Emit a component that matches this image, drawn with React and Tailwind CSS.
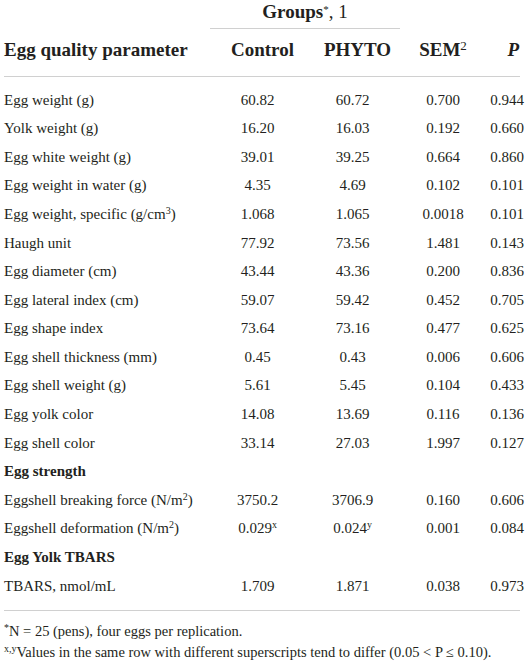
const rows = [
    { label: 'Egg weight (g)', c: '60.82', p: '60.72', sem: '0.700', pv: '0.944' },
    { label: 'Yolk weight (g)', c: '16.20', p: '16.03', sem: '0.192', pv: '0.660' },
    { label: 'Egg white weight (g)', c: '39.01', p: '39.25', sem: '0.664', pv: '0.860' },
    { label: 'Egg weight in water (g)', c: '4.35', p: '4.69', sem: '0.102', pv: '0.101' },
    {
        label: (
            <>
                Egg weight, specific (g/cm<sup className="text-[10px]">3</sup>)
            </>
        ),
        c: '1.068',
        p: '1.065',
        sem: '0.0018',
        pv: '0.101',
    },
    { label: 'Haugh unit', c: '77.92', p: '73.56', sem: '1.481', pv: '0.143' },
    { label: 'Egg diameter (cm)', c: '43.44', p: '43.36', sem: '0.200', pv: '0.836' },
    { label: 'Egg lateral index (cm)', c: '59.07', p: '59.42', sem: '0.452', pv: '0.705' },
    { label: 'Egg shape index', c: '73.64', p: '73.16', sem: '0.477', pv: '0.625' },
    { label: 'Egg shell thickness (mm)', c: '0.45', p: '0.43', sem: '0.006', pv: '0.606' },
    { label: 'Egg shell weight (g)', c: '5.61', p: '5.45', sem: '0.104', pv: '0.433' },
    { label: 'Egg yolk color', c: '14.08', p: '13.69', sem: '0.116', pv: '0.136' },
    { label: 'Egg shell color', c: '33.14', p: '27.03', sem: '1.997', pv: '0.127' },
    { section: 'Egg strength' },
    {
        label: (
            <>
                Eggshell breaking force (N/m<sup className="text-[10px]">2</sup>)
            </>
        ),
        c: '3750.2',
        p: '3706.9',
        sem: '0.160',
        pv: '0.606',
    },
    {
        label: (
            <>
                Eggshell deformation (N/m<sup className="text-[10px]">2</sup>)
            </>
        ),
        c: (
            <>
                0.029<sup className="text-[10px]">x</sup>
            </>
        ),
        p: (
            <>
                0.024<sup className="text-[10px]">y</sup>
            </>
        ),
        sem: '0.001',
        pv: '0.084',
    },
    { section: 'Egg Yolk TBARS' },
    { label: 'TBARS, nmol/mL', c: '1.709', p: '1.871', sem: '0.038', pv: '0.973' },
];

const cols = 'grid grid-cols-[206px_95px_95px_86px_38px]';

export default function App() {
    return (
        <div
            className="w-[531px] h-[665px] overflow-hidden bg-white text-[#231f20] pl-[4px] pr-[11px]"
            style={{ fontFamily: '"Liberation Serif", "Times New Roman", serif' }}
        >
            {/* header */}
            <div className={cols}>
                <div />
                <div className="col-span-2 h-[29px] flex items-center justify-center border-b border-[#d0d0d0] text-[19px] pb-[3px]">
                    <span className="font-bold">
                        Groups<sup className="text-[11px] font-normal">*</sup>
                    </span>
                    <span>, 1</span>
                </div>
            </div>
            <div className={`${cols} h-[48px] items-center border-b border-[#d0d0d0] text-[19px] font-bold pb-[4px]`}>
                <div>Egg quality parameter</div>
                <div className="text-center pl-[10px]">Control</div>
                <div className="text-center pl-[10px]">PHYTO</div>
                <div className="text-center">
                    SEM<sup className="text-[13px] font-normal">2</sup>
                </div>
                <div className="text-right pr-[5px] italic">P</div>
            </div>

            {/* body */}
            <div className="pt-[8.5px] text-[15px]">
                {rows.map((r, i) =>
                    r.section ? (
                        <div key={i} className="h-[28.6px] flex items-center font-bold">
                            {r.section}
                        </div>
                    ) : (
                        <div key={i} className={`${cols} h-[28.6px] items-center`}>
                            <div>{r.label}</div>
                            <div className="text-center">{r.c}</div>
                            <div className="text-center">{r.p}</div>
                            <div className="text-center">{r.sem}</div>
                            <div className="text-right">{r.pv}</div>
                        </div>
                    )
                )}
            </div>

            <div className="mt-[10px] border-t border-[#d0d0d0] pt-[10px] text-[14.5px] leading-[21px]">
                <div>
                    <sup className="text-[10px]">*</sup>N = 25 (pens), four eggs per replication.
                </div>
                <div className="whitespace-nowrap">
                    <sup className="text-[10px]">x,y</sup>Values in the same row with different superscripts
                    tend to differ (0.05 &lt; P ≤ 0.10).
                </div>
            </div>
        </div>
    );
}
